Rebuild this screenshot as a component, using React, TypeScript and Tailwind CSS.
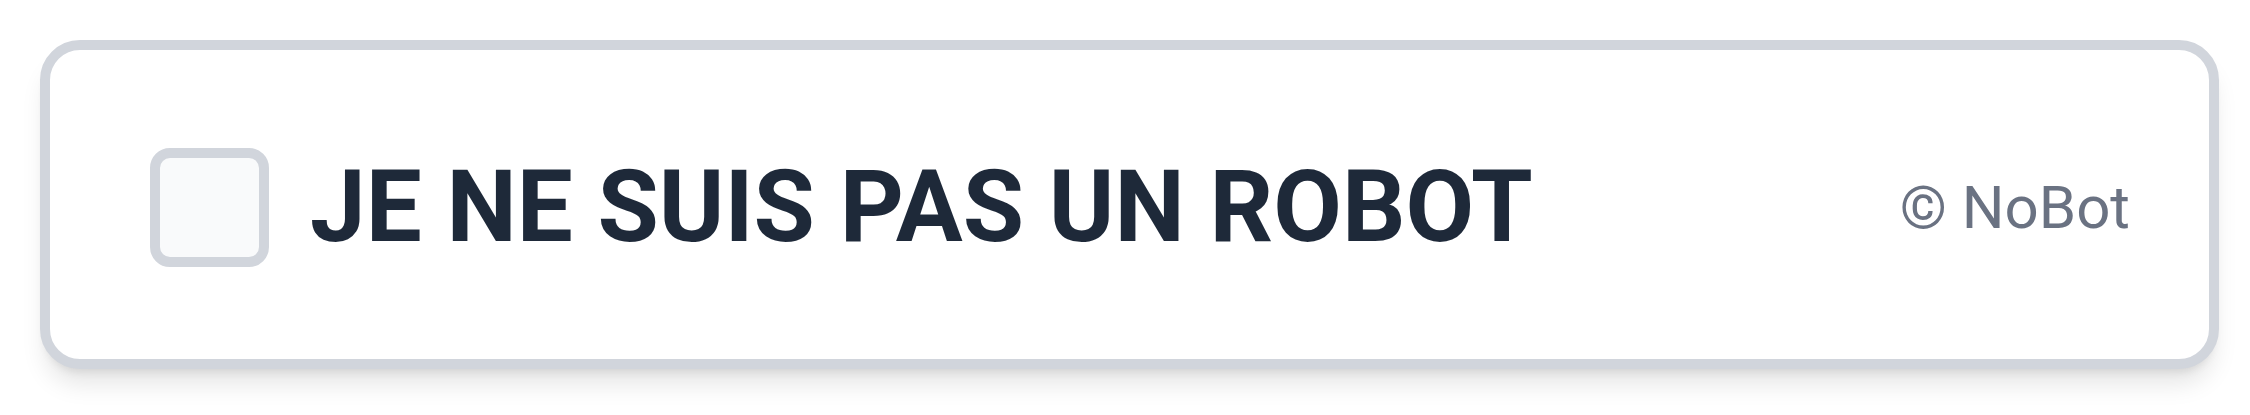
import React from "react";

export default function App() {
  return (
    <div className="w-[2250px] h-[415px] bg-white pl-10 pt-10" style={{ fontFamily: "Roboto, 'Liberation Sans', sans-serif" }}>
      <div className="flex h-[329px] w-[2179px] items-center justify-between rounded-[40px] border-[10px] border-gray-300 bg-white pl-[100px] pr-[79px] pt-[6px] shadow-xl">
        <div className="flex items-center gap-[41px]">
          <div className="h-[119px] w-[119px] rounded-[20px] border-[10px] border-gray-300 bg-gray-50" />
          <span className="text-[99.6px] font-bold leading-none text-gray-800">JE NE SUIS PAS UN ROBOT</span>
        </div>
        <span className="text-[60px] leading-none text-gray-500">© NoBot</span>
      </div>
    </div>
  );
}
